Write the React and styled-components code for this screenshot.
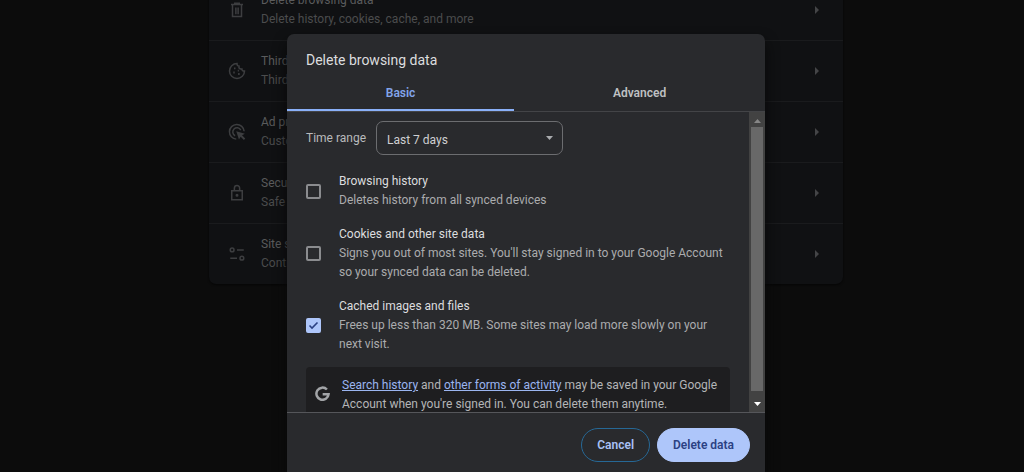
import React from "react";
import styled, { createGlobalStyle } from "styled-components";

const GlobalStyle = createGlobalStyle`
  *, *::before, *::after { box-sizing: border-box; }
  body {
    margin: 0;
    background: #0c0c0c;
    font-family: "Segoe UI", Roboto, "Noto Sans", sans-serif;
    font-size: 12px;
    line-height: 19px;
  }
  h2, p { margin: 0; font-weight: 400; }
`;

const Page = styled.div`
  position: relative;
  height: 100vh;
  overflow: hidden;
  padding-left: 28px;
`;

const SettingsCard = styled.ul`
  list-style: none;
  width: 64%;
  min-width: 560px;
  max-width: 634px;
  margin: -20px auto 0;
  padding: 0;
  background: #101113;
  border-radius: 7px;
  box-shadow: 0 1px 2px #060606;
`;

const SettingsRow = styled.li`
  & + & { border-top: 1px solid #1a1b1d; }
`;

const RowLink = styled.a`
  display: flex;
  align-items: center;
  height: 60px;
  padding: 0 24px 0 19px;
  color: #4b4c4d;
  text-decoration: none;
`;

const RowIcon = styled.svg`
  flex: none;
  width: 18px;
  height: 18px;
  margin-right: 15px;
  fill: none;
  stroke: #3d3e40;
  stroke-width: 2;
`;

const RowText = styled.span`
  flex: 1;
  display: flex;
  flex-direction: column;
`;

const RowTitle = styled.span`
  color: #5a5b5c;
`;

const RowArrow = styled.svg`
  width: 4px;
  height: 8px;
  fill: #444547;
`;

const Backdrop = styled.div`
  position: absolute;
  inset: 0;
  display: flex;
  justify-content: center;
  align-items: flex-start;
  padding: 34px 0 0 28px;
`;

const Dialog = styled.section`
  display: flex;
  flex-direction: column;
  width: 478px;
  max-width: 100%;
  height: calc(100vh - 28px);
  background: #292a2d;
  border-radius: 7px;
  overflow: hidden;
  box-shadow: 0 8px 14px #080808;
`;

const DialogTitle = styled.h2`
  padding: 17px 19px 6px;
  color: #dcdddf;
  font-size: 14px;
  line-height: 19px;
`;

const TabList = styled.div`
  display: flex;
  height: 36px;
  border-bottom: 1px solid #434447;
`;

const Tab = styled.button`
  flex: 1 1 auto;
  padding: 2px 0 0;
  border: 0;
  border-bottom: 2px solid ${(p) => (p.$active ? "#8ab0f8" : "transparent")};
  background: none;
  color: ${(p) => (p.$active ? "#82a4ea" : "#bfc0c2")};
  font: inherit;
  font-weight: 600;
`;

const ScrollFrame = styled.div`
  flex: 1;
  min-height: 0;
  display: flex;
`;

const ScrollContent = styled.div`
  flex: 1;
  min-width: 0;
  padding: 9px 19px 18px;
  overflow-y: auto;
  scrollbar-width: none;
`;

const ScrollTrack = styled.div`
  flex: none;
  display: flex;
  flex-direction: column;
  align-items: center;
  width: 16px;
  background: #424242;
`;

const ScrollArrow = styled.svg`
  flex: none;
  width: 7px;
  height: 15px;
  fill: ${(p) => (p.$enabled ? "#ffffff" : "#868686")};
`;

const ScrollThumb = styled.div`
  width: 12px;
  height: 88%;
  margin-bottom: auto;
  background: #686868;
`;

const TimeRange = styled.div`
  display: flex;
  align-items: center;
  gap: 10px;
  margin-bottom: 17px;
  color: #b9babc;
`;

const SelectBox = styled.div`
  display: flex;
  align-items: center;
  width: 187px;
  height: 34px;
  border: 1px solid #6c6d70;
  border-radius: 7px;
`;

const Select = styled.select`
  appearance: none;
  width: 100%;
  height: 100%;
  padding: 4px 30px 0 10px;
  margin-right: -16px;
  border: 0;
  background: none;
  color: #cfd0d2;
  font: inherit;
`;

const SelectArrow = styled.svg`
  flex: none;
  width: 7px;
  height: 4px;
  margin-right: 9px;
  fill: #a9abae;
  pointer-events: none;
`;

const Option = styled.label`
  display: flex;
  align-items: center;
  gap: 18px;
  margin-bottom: ${(p) => (p.$last ? 13 : 15)}px;
`;

const CheckFrame = styled.span`
  flex: none;
  display: grid;
  width: 15px;
  height: 15px;
  & > * { grid-area: 1 / 1; }
`;

const Checkbox = styled.input`
  appearance: none;
  width: 15px;
  height: 15px;
  margin: 0;
  border: 2px solid #8b8c8f;
  border-radius: 2px;
  &:checked { border-color: #aec6fa; background: #aec6fa; }
`;

const CheckMark = styled.svg`
  width: 15px;
  height: 15px;
  fill: none;
  stroke: #2b4183;
  stroke-width: 1.600;
  pointer-events: none;
  visibility: hidden;
  input:checked + & { visibility: visible; }
`;

const OptionText = styled.span`
  flex: 1;
  display: flex;
  flex-direction: column;
`;

const OptionTitle = styled.span`
  color: #dcdddf;
`;

const OptionDetail = styled.span`
  color: #abacae;
`;

const Notice = styled.div`
  display: flex;
  align-items: center;
  gap: 12px;
  padding: 9px 9px 5px;
  background: #1e1e20;
  border-radius: 4px;
  color: #b4b5b7;
`;

const GoogleMark = styled.svg`
  flex: none;
  width: 15px;
  height: 15px;
  margin-bottom: 4px;
  fill: none;
  stroke: #a2a4a7;
  stroke-width: 3;
`;

const NoticeLink = styled.a`
  color: #9bb5f0;
  text-decoration: underline;
`;

const Footer = styled.footer`
  flex: none;
  display: flex;
  justify-content: flex-end;
  gap: 7px;
  padding: 15px 15px 16px;
  border-top: 1px solid #55565a;
`;

const Button = styled.button`
  min-width: 68px;
  height: 34px;
  padding: 1px 15px 0;
  border: 1px solid ${(p) => (p.$primary ? "#aec6fa" : "#266896")};
  border-radius: 17px;
  background: ${(p) => (p.$primary ? "#aec6fa" : "transparent")};
  color: ${(p) => (p.$primary ? "#2b4183" : "#a9c1f6")};
  font: inherit;
  font-weight: 600;
`;

const icons = {
  trash: (
    <>
      <path d="M4 4.500h16M9 4V3h6v1M6 5v15.500h12V5M10.500 8.500v9M13.500 8.500v9" />
    </>
  ),
  cookie: (
    <>
      <path d="M12 2a10 10 0 1 0 10 10c-2 .3-3.500-.8-3.600-2.800C15.500 9.800 14 8 14.700 5.600 12.800 5.500 11.800 4 12 2z" />
      <path d="M8 8.500h2M7 14h2M13.500 16h2M13 11.500h1.500" strokeWidth="2.400" />
    </>
  ),
  ads: (
    <>
      <path d="M11 21.500A9.800 9.800 0 1 1 21.500 11" />
      <path d="M9.500 17A5.600 5.600 0 1 1 17 9.500" />
      <path d="M11 11l3.600 11 2.300-3.800 4.300 4.300 1.800-1.800-4.300-4.300 3.800-2z" fill="#3d3e40" stroke="none" />
    </>
  ),
  lock: (
    <>
      <path d="M5 9h14v12H5zM8.500 8.500V5.500a3.500 3.500 0 0 1 7 0v3" />
      <circle cx="12" cy="15" r="1" fill="#3d3e40" />
    </>
  ),
  tune: (
    <>
      <circle cx="5.500" cy="6.500" r="2.500" />
      <circle cx="18.500" cy="17.500" r="2.500" />
      <path d="M12 6.500h9M3 17.500h9" />
    </>
  ),
};

const rows = [
  { icon: "trash", title: "Delete browsing data", detail: "Delete history, cookies, cache, and more" },
  { icon: "cookie", title: "Third", detail: "Third" },
  { icon: "ads", title: "Ad privacy", detail: "Customize" },
  { icon: "lock", title: "Security", detail: "Safe Browsing" },
  { icon: "tune", title: "Site settings", detail: "Controls" },
];

const options = [
  { title: "Browsing history", detail: "Deletes history from all synced devices" },
  {
    title: "Cookies and other site data",
    detail:
      "Signs you out of most sites. You'll stay signed in to your Google Account so your synced data can be deleted.",
  },
  {
    title: "Cached images and files",
    detail: "Frees up less than 320 MB. Some sites may load more slowly on your next visit.",
    checked: true,
  },
];

export default function App() {
  return (
    <Page>
      <GlobalStyle />
      <SettingsCard>
        {rows.map((row) => (
          <SettingsRow key={row.title}>
            <RowLink href="#">
              <RowIcon viewBox="0 0 24 24" aria-hidden="true">{icons[row.icon]}</RowIcon>
              <RowText>
                <RowTitle>{row.title}</RowTitle>
                <span>{row.detail}</span>
              </RowText>
              <RowArrow viewBox="0 0 4 8" aria-hidden="true"><path d="M0 0l4 4-4 4z" /></RowArrow>
            </RowLink>
          </SettingsRow>
        ))}
      </SettingsCard>
      <Backdrop>
        <Dialog role="dialog" aria-labelledby="dialog-title">
          <DialogTitle id="dialog-title">Delete browsing data</DialogTitle>
          <TabList role="tablist">
            <Tab role="tab" aria-selected="true" $active>Basic</Tab>
            <Tab role="tab" aria-selected="false">Advanced</Tab>
          </TabList>
          <ScrollFrame>
            <ScrollContent>
              <TimeRange>
                <label htmlFor="time-range">Time range</label>
                <SelectBox>
                  <Select id="time-range" defaultValue="7">
                    <option value="7">Last 7 days</option>
                  </Select>
                  <SelectArrow viewBox="0 0 7 4" aria-hidden="true"><path d="M0 0h7L3.500 4z" /></SelectArrow>
                </SelectBox>
              </TimeRange>
              {options.map((option, i) => (
                <Option key={option.title} $last={i === options.length - 1}>
                  <CheckFrame>
                    <Checkbox type="checkbox" defaultChecked={option.checked} />
                    <CheckMark viewBox="0 0 15 15" aria-hidden="true"><path d="M3.500 7.500l2.500 2.500 5.500-5.500" /></CheckMark>
                  </CheckFrame>
                  <OptionText>
                    <OptionTitle>{option.title}</OptionTitle>
                    <OptionDetail>{option.detail}</OptionDetail>
                  </OptionText>
                </Option>
              ))}
              <Notice>
                <GoogleMark viewBox="0 0 18 18" aria-hidden="true">
                  <path d="M14.300 4.200A7.300 7.300 0 1 0 16.300 9.800H9.200" />
                </GoogleMark>
                <p>
                  <NoticeLink href="#">Search history</NoticeLink> and{" "}
                  <NoticeLink href="#">other forms of activity</NoticeLink> may be saved in your Google
                  Account when you're signed in. You can delete them anytime.
                </p>
              </Notice>
            </ScrollContent>
            <ScrollTrack aria-hidden="true">
              <ScrollArrow viewBox="0 0 7 15"><path d="M0 11h7L3.500 7z" /></ScrollArrow>
              <ScrollThumb />
              <ScrollArrow viewBox="0 0 7 15" $enabled><path d="M0 5h7L3.500 9z" /></ScrollArrow>
            </ScrollTrack>
          </ScrollFrame>
          <Footer>
            <Button type="button">Cancel</Button>
            <Button type="button" $primary>Delete data</Button>
          </Footer>
        </Dialog>
      </Backdrop>
    </Page>
  );
}
